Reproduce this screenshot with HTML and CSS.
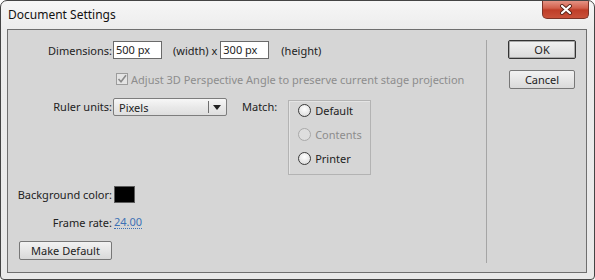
FILE: index.html
```html
<!DOCTYPE html>
<html>
<head>
<meta charset="utf-8">
<link rel="stylesheet" href="styles.css">
</head>
<body>
<div class="window">
  <div class="titlebar">
    <span class="title">Document Settings</span>
    <div class="close">
      <svg width="14" height="11" viewBox="0 0 14 11">
        <path d="M3 2 L11 9 M11 2 L3 9" stroke="#5a2418" stroke-width="4" stroke-linecap="round"/>
        <path d="M3 2 L11 9 M11 2 L3 9" stroke="#ffffff" stroke-width="2.2" stroke-linecap="round"/>
      </svg>
    </div>
  </div>
  <div class="panel">
    <div class="main">
      <div class="row dims">
        <span class="lbl">Dimensions:</span>
        <div class="ctrls">
          <span class="field">500 px</span>
          <span class="txt wtxt">(width)&nbsp;x</span>
          <span class="field">300 px</span>
          <span class="txt htxt">(height)</span>
        </div>
      </div>
      <div class="row check">
        <span class="lbl"></span>
        <div class="ctrls">
          <span class="cbox">
            <svg width="12" height="12" viewBox="0 0 12 12">
              <rect x="0.5" y="0.5" width="11" height="11" fill="#e4e4e4" stroke="#9c9c9c"/>
              <path d="M2.5 6 L5 8.8 L10 2.2" fill="none" stroke="#8a8a8a" stroke-width="1.6"/>
            </svg>
          </span>
          <span class="disabled">Adjust 3D Perspective Angle to preserve current stage projection</span>
        </div>
      </div>
      <div class="row ruler">
        <span class="lbl">Ruler units:</span>
        <div class="ctrls">
          <div class="select">
            <span class="sel-text">Pixels</span>
            <span class="sel-sep"></span>
            <svg class="sel-arrow" width="8" height="5" viewBox="0 0 8 5"><path d="M0 0 H8 L4 5 Z" fill="#222"/></svg>
          </div>
          <span class="match">Match:</span>
          <div class="group">
            <div class="radio"><span class="circle"></span><span>Default</span></div>
            <div class="radio off"><span class="circle"></span><span>Contents</span></div>
            <div class="radio"><span class="circle"></span><span>Printer</span></div>
          </div>
        </div>
      </div>
      <div class="row bg">
        <span class="lbl">Background color:</span>
        <div class="ctrls"><span class="swatch"></span></div>
      </div>
      <div class="row fr">
        <span class="lbl">Frame rate:</span>
        <div class="ctrls"><span class="link">24.00</span></div>
      </div>
      <div class="row md">
        <span class="btn make">Make Default</span>
      </div>
    </div>
    <div class="sep"></div>
    <div class="buttons">
      <span class="btn ok">OK</span>
      <span class="btn cancel">Cancel</span>
    </div>
  </div>
</div>
</body>
</html>
```
FILE: styles.css
```css
html, body {
  margin: 0;
  padding: 0;
  background: #ffffff;
}
body {
  font-family: "Noto Sans", "Open Sans", sans-serif;
  font-size: 11px;
  color: #222;
}
.window {
  width: 595px;
  height: 280px;
  box-sizing: border-box;
  border: 1px solid #444;
  border-radius: 7px 7px 4px 4px;
  background: linear-gradient(#f6f6f6, #ececec 30px, #e9e9e9);
  display: flex;
  flex-direction: column;
  overflow: hidden;
}
.titlebar {
  height: 28px;
  display: flex;
  justify-content: space-between;
  align-items: flex-start;
  padding-left: 7px;
  padding-right: 5px;
  flex: none;
}
.title {
  font-size: 12px;
  line-height: 28px;
  color: #111;
}
.close {
  width: 47px;
  height: 19px;
  box-sizing: border-box;
  margin-top: -1px;
  border: 1px solid #7b3327;
  border-top: none;
  border-radius: 0 0 5px 5px;
  background: linear-gradient(#e79a8c, #d2604c 45%, #bf3d28 55%, #c9513a);
  display: flex;
  align-items: center;
  justify-content: center;
}
.panel {
  margin: 0 7px 0 6px;
  height: 244px;
  box-sizing: border-box;
  border: 1px solid #6f6f6f;
  background: #d6d6d6;
  display: flex;
}
.main {
  width: 478px;
  padding-top: 11px;
  display: flex;
  flex-direction: column;
}
.row {
  display: flex;
  align-items: center;
}
.lbl {
  width: 104px;
  text-align: right;
  flex: none;
  margin-right: 1px;
}
.ctrls {
  display: flex;
  align-items: center;
}
.dims { height: 18px; }
.field {
  width: 49px;
  height: 18px;
  box-sizing: border-box;
  border: 1px solid #6a6a6a;
  background: #fff;
  padding-left: 2px;
  line-height: 15px;
}
.wtxt { margin: 0 3px 0 11px; }
.htxt { margin-left: 12px; }
.check { margin-top: 12px; height: 16px; }
.cbox { margin-left: 3px; display: flex; }
.disabled { color: #8d8d8d; margin-left: 3px; }
.ruler { margin-top: 11px; align-items: flex-start; }
.ruler .lbl { line-height: 18px; }
.ruler .ctrls { align-items: flex-start; }
.select {
  width: 114px;
  height: 18px;
  box-sizing: border-box;
  border: 1px solid #7d7d7d;
  border-radius: 2px;
  background: linear-gradient(#f7f7f7, #e9e9e9 50%, #dedede);
  display: flex;
  align-items: center;
}
.sel-text { flex: 1; padding-left: 5px; }
.sel-sep { width: 1px; height: 12px; background: #6f6f6f; margin-right: 4px; }
.sel-arrow { margin-right: 5px; }
.match { margin-left: 15px; line-height: 18px; }
.group {
  margin: 2px 0 0 11px;
  width: 83px;
  height: 75px;
  box-sizing: border-box;
  border: 1px solid #b3b3b3;
  box-shadow: inset 1px 1px 0 #e4e4e4;
  padding: 1px 0 0 9px;
  display: flex;
  flex-direction: column;
  gap: 8px;
}
.radio {
  display: flex;
  align-items: center;
  height: 16px;
}
.circle {
  width: 11px;
  height: 11px;
  border-radius: 50%;
  border: 1px solid #3a3a3a;
  background: radial-gradient(circle at 50% 35%, #ffffff, #e2e2e2 70%, #cfcfcf);
  margin-right: 4px;
}
.radio.off { color: #8d8d8d; }
.radio.off .circle { border-color: #a9a9a9; background: #dedede; }
.bg { margin-top: 11px; height: 16px; }
.swatch {
  width: 19px;
  height: 15px;
  background: #000;
  border: 1px solid #5c5c5c;
  margin-left: 1px;
}
.fr { margin-top: 12px; height: 16px; }
.link {
  color: #3e72b5;
  border-bottom: 1px dotted #3e72b5;
  line-height: 13px;
  margin-left: 1px;
}
.md { margin-top: 11px; }
.btn {
  height: 19px;
  box-sizing: border-box;
  border: 1px solid #777;
  border-radius: 2px;
  background: linear-gradient(#f2f2f2, #e6e6e6 50%, #d9d9d9);
  display: flex;
  align-items: center;
  justify-content: center;
  color: #222;
}
.make { width: 93px; margin-left: 11px; }
.sep {
  width: 1px;
  background: #a5a5a5;
  margin: 10px 0 9px 0;
}
.buttons {
  margin-left: 21px;
  padding-top: 10px;
  display: flex;
  flex-direction: column;
  align-items: center;
  width: 68px;
}
.ok {
  width: 68px;
  height: 19px;
  border: 1px solid #333;
  box-shadow: inset 0 0 0 1px #a8a8a8;
}
.cancel {
  width: 66px;
  margin-top: 11px;
}
```
